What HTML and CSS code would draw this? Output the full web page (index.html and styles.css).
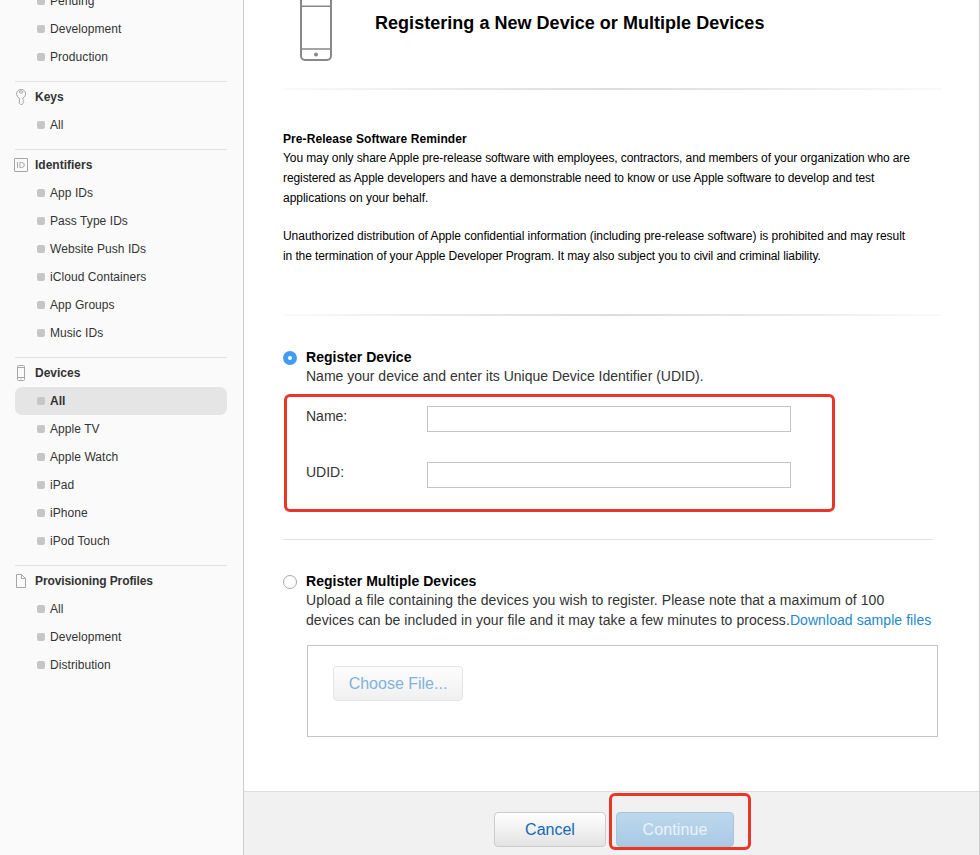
FILE: index.html
```html
<!DOCTYPE html>
<html lang="en">
<head>
<meta charset="utf-8">
<title>Register Devices</title>
<link rel="stylesheet" href="styles.css">
</head>
<body>
<div class="page">
  <nav class="sidebar">
    <section class="group group-clipped">
      <ul>
        <li>Pending</li>
        <li>Development</li>
        <li>Production</li>
      </ul>
    </section>
    <section class="group">
      <h2><svg class="icon" viewBox="0 0 14 16" width="14" height="16"><path d="M5.3 9A4.5 4.5 0 1 1 8.9 9V10.5L9.7 11.3L9 12.3L9.7 13.5L8.2 15.4H6.6L5.3 14.2Z"/><ellipse cx="7.1" cy="3" rx="1.8" ry="1.2"/></svg>Keys</h2>
      <ul>
        <li>All</li>
      </ul>
    </section>
    <section class="group">
      <h2><svg class="icon" viewBox="0 0 14 16" width="14" height="16"><rect x=".5" y="1.5" width="13" height="13" rx=".5"/><path d="M3.5 5V11M5.9 5.5V10.5H7.5Q10.3 10.5 10.3 8T7.5 5.5Z"/></svg>Identifiers</h2>
      <ul>
        <li>App IDs</li>
        <li>Pass Type IDs</li>
        <li>Website Push IDs</li>
        <li>iCloud Containers</li>
        <li>App Groups</li>
        <li>Music IDs</li>
      </ul>
    </section>
    <section class="group">
      <h2><svg class="icon" viewBox="0 0 14 16" width="14" height="16"><rect x="3.5" y=".5" width="7" height="15" rx="1"/><path d="M3.5 2.5H10.5M3.5 12.5H10.5M6.5 14H7.5"/></svg>Devices</h2>
      <ul>
        <li class="current">All</li>
        <li>Apple TV</li>
        <li>Apple Watch</li>
        <li>iPad</li>
        <li>iPhone</li>
        <li>iPod Touch</li>
      </ul>
    </section>
    <section class="group">
      <h2><svg class="icon" viewBox="0 0 14 16" width="14" height="16"><path d="M2.5 1.5H7.5L11.5 5.5V14.5H2.5ZM7.5 1.5V5.5H11.5"/></svg><span class="tight">Provisioning Profiles</span></h2>
      <ul>
        <li>All</li>
        <li>Development</li>
        <li>Distribution</li>
      </ul>
    </section>
  </nav>
  <main class="main">
    <div class="content">
      <header class="head">
        <svg class="phone" viewBox="0 0 32 66" width="32" height="66"><rect x="1" y="1" width="30" height="64" rx="4"/><path d="M1 11.3H31M1 54H31"/><circle cx="16" cy="59.5" r="2"/></svg>
        <h1>Registering a New Device or Multiple Devices</h1>
      </header>
      <div class="fade-rule"></div>
      <section class="reminder">
        <h3>Pre-Release Software Reminder</h3>
        <p><span class="r1">You may only share Apple pre-release software with employees, contractors, and members of your organization who are</span><br><span class="r2">registered as Apple developers and have a demonstrable need to know or use Apple software to develop and test</span><br><span class="r3">applications on your behalf.</span></p>
        <p><span class="r4">Unauthorized distribution of Apple confidential information (including pre-release software) is prohibited and may result</span><br><span class="r5">in the termination of your Apple Developer Program. It may also subject you to civil and criminal liability.</span></p>
      </section>
      <div class="fade-rule"></div>
      <section class="option single">
        <span class="radio on"></span>
        <div class="option-body">
          <h3>Register Device</h3>
          <p>Name your device and enter its Unique Device Identifier (UDID).</p>
          <div class="fields">
            <label>Name:<input type="text"></label>
            <label>UDID:<input type="text"></label>
          </div>
        </div>
      </section>
      <section class="option multiple">
        <span class="radio"></span>
        <div class="option-body">
          <h3>Register Multiple Devices</h3>
          <p>Upload a file containing the devices you wish to register. Please note that a maximum of 100<br>devices can be included in your file and it may take a few minutes to process.<a>Download sample files</a></p>
          <div class="upload"><button class="btn choose">Choose File...</button></div>
        </div>
      </section>
    </div>
    <footer class="actions">
      <button class="btn cancel">Cancel</button>
      <div class="mark"><button class="btn continue">Continue</button></div>
    </footer>
  </main>
</div>
</body>
</html>
```
FILE: styles.css
```css
* { box-sizing: border-box; }
body {
  margin: 0;
  font: 14px/20px "Liberation Sans", Arial, sans-serif;
  color: #333;
  background: #fff;
}
h1, h2, h3, p, ul { margin: 0; padding: 0; }
.page { display: flex; height: 855px; overflow: hidden; }

.sidebar {
  width: 244px;
  flex: none;
  padding: 0 16px 0 15px;
  background: #fafafa;
  border-right: 1px solid #ccc;
  font-size: 12px;
}
.group { padding: 1px 0 10px; border-top: 1px solid #e2e2e2; }
.group-clipped { margin-top: -13px; padding-top: 0; border-top: 0; }
.group h2 {
  display: flex;
  align-items: center;
  gap: 7px;
  height: 28px;
  margin-left: -1px;
  font-size: 12px;
}
.tight { letter-spacing: -0.1px; }
.icon { fill: none; stroke: #a6a6a6; stroke-width: 1; }
.group ul { list-style: none; }
.group li {
  display: flex;
  align-items: center;
  gap: 5px;
  height: 28px;
  padding-left: 22px;
  border-radius: 7px;
  letter-spacing: 0.06px;
}
.group li::before {
  content: "";
  width: 8px;
  height: 8px;
  border-radius: 2px;
  background: #c6c6c6;
}
.group .current { background: #e5e5e5; font-weight: bold; }

.main {
  flex: 1;
  display: flex;
  flex-direction: column;
  border-right: 1px solid #ccc;
}
.content { flex: 1; padding-left: 39px; }
.head { display: flex; align-items: flex-start; height: 88px; padding-left: 17px; }
.phone { margin-top: -5px; fill: none; stroke: #888; stroke-width: 2; }
.phone path { stroke-width: 1.5; }
.phone circle { fill: #888; stroke: none; }
h1 {
  margin: 13px 0 0 43px;
  font-size: 18px;
  line-height: 20px;
  letter-spacing: 0.03px;
  color: #000;
  white-space: nowrap;
}
.fade-rule {
  width: 659px;
  height: 2px;
  background: linear-gradient(90deg, #fafafa, #ececec 20%, #dcdcdc 50%, #ececec 80%, #fafafa);
}
.reminder { height: 224px; padding-top: 39px; font-size: 12px; color: #000; white-space: nowrap; }
.reminder h3 { font-size: 12px; line-height: 20px; height: 19px; letter-spacing: 0.08px; }
.reminder p { margin-bottom: 18px; }
.r1, .r2, .r5 { letter-spacing: -0.096px; }
.r3 { letter-spacing: -0.03px; }
.r4 { letter-spacing: -0.046px; }

.option { display: flex; gap: 9px; white-space: nowrap; }
.option-body { flex: none; }
.option h3 { font-size: 14px; line-height: 20px; height: 19px; color: #000; letter-spacing: 0.03px; }
.radio {
  flex: none;
  width: 14px;
  height: 14px;
  margin-top: 4px;
  border: 1px solid #a9a9a9;
  border-radius: 50%;
}
.radio.on { border: 5px solid #429bf5; }
.single { width: 650px; height: 224px; padding-top: 31px; border-bottom: 1px solid #e0e0e0; }
.fields {
  width: 551px;
  height: 118px;
  margin: 8px 0 0 -22px;
  padding: 9px 0 0 19px;
  border: 3px solid #ea3529;
  border-radius: 6px;
}
.fields label { display: flex; height: 56px; }
.fields input {
  width: 364px;
  height: 26px;
  margin-left: auto;
  margin-right: 41px;
  border: 1px solid #c4c4c4;
  background: #fff;
}
.multiple { padding-top: 31px; }
.multiple p { letter-spacing: 0.068px; }
.option a { color: #1e88c9; }
.upload {
  width: 631px;
  height: 92px;
  margin: 15px 0 0 1px;
  padding: 20px 0 0 25px;
  border: 1px solid #c4c4c4;
}
.btn {
  display: block;
  height: 35px;
  padding: 0;
  border: 1px solid #ccc;
  border-radius: 4px;
  background: linear-gradient(#fff, #e3e3e3);
  font: 16px/33px "Liberation Sans", Arial, sans-serif;
}
.choose { width: 130px; color: #80b2dd; border-color: #e4e4e4; background: linear-gradient(#fdfdfd, #f0f0f0); }
.actions {
  display: flex;
  height: 64px;
  padding-left: 250px;
  background: #f1f1f1;
  border-top: 1px solid #ddd;
}
.cancel { width: 112px; margin-top: 20px; color: #1369b8; }
.mark {
  width: 142px;
  height: 57px;
  margin: 1px 0 0 3px;
  padding: 16px 0 0 4px;
  border: 3px solid #ea3529;
  border-radius: 6px;
}
.continue {
  width: 118px;
  color: #eaf3fa;
  border-color: #a5c5df;
  background: linear-gradient(#bdd8ed, #a9c9e3);
  letter-spacing: 0.12px;
}
```
